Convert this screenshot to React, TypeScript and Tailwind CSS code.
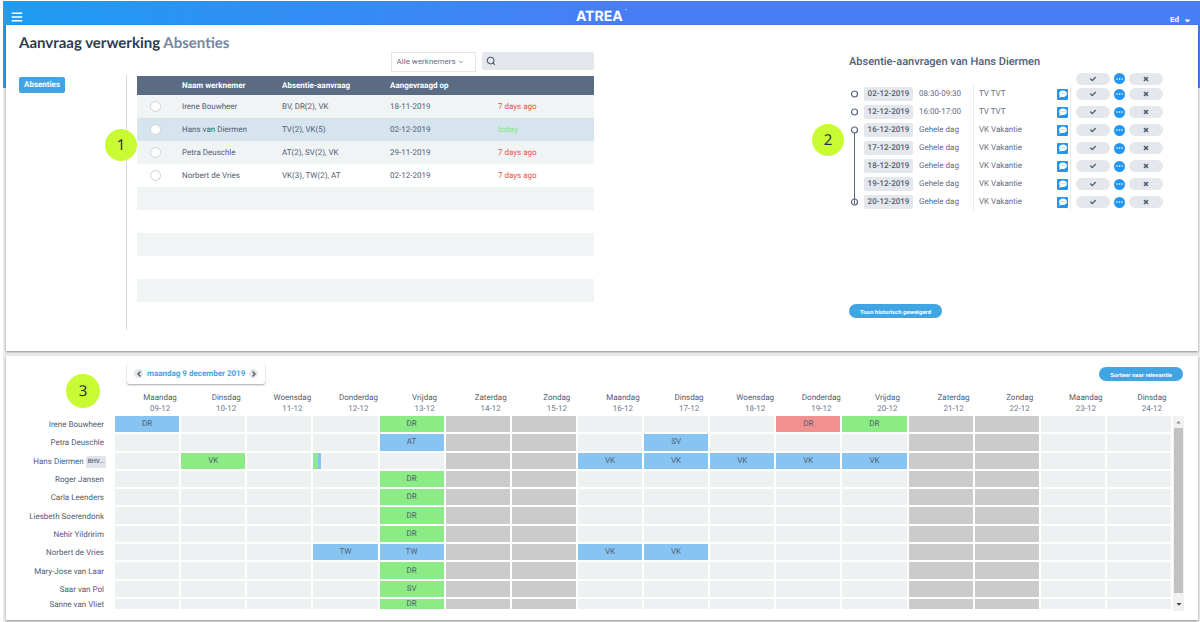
import { useState } from "react";
import { FaBars, FaCaretDown, FaCheck, FaCommentDots, FaTimes } from "react-icons/fa";
import { ChevronDown, ChevronLeft, ChevronRight, Search } from "lucide-react";

interface Employee {
    name: string;
    absence: string;
    requested: string;
    age: string;
}

const employees: Employee[] = [
    { name: "Irene Bouwheer", absence: "BV, DR(2), VK", requested: "18-11-2019", age: "7 days ago" },
    { name: "Hans van Diermen", absence: "TV(2), VK(5)", requested: "02-12-2019", age: "today" },
    { name: "Petra Deuschle", absence: "AT(2), SV(2), VK", requested: "29-11-2019", age: "7 days ago" },
    { name: "Norbert de Vries", absence: "VK(3), TW(2), AT", requested: "02-12-2019", age: "7 days ago" },
];

type Mark = "single" | "start" | "middle" | "end";

const requests: { date: string; time: string; type: string; mark: Mark }[] = [
    { date: "02-12-2019", time: "08:30-09:30", type: "TV TVT", mark: "single" },
    { date: "12-12-2019", time: "16:00-17:00", type: "TV TVT", mark: "single" },
    { date: "16-12-2019", time: "Gehele dag", type: "VK Vakantie", mark: "start" },
    { date: "17-12-2019", time: "Gehele dag", type: "VK Vakantie", mark: "middle" },
    { date: "18-12-2019", time: "Gehele dag", type: "VK Vakantie", mark: "middle" },
    { date: "19-12-2019", time: "Gehele dag", type: "VK Vakantie", mark: "middle" },
    { date: "20-12-2019", time: "Gehele dag", type: "VK Vakantie", mark: "end" },
];

const weekdays = ["Maandag", "Dinsdag", "Woensdag", "Donderdag", "Vrijdag", "Zaterdag", "Zondag"];

const days = Array.from({ length: 16 }, (_, i) => ({
    name: weekdays[i % 7],
    date: `${String(9 + i).padStart(2, "0")}-12`,
    weekend: i % 7 > 4,
}));

const tones = {
    blue: "bg-[#88c4f1]",
    green: "bg-[#8beb85]",
    red: "bg-[#f29090]",
    // two short entries at the start of the day
    split: "bg-[linear-gradient(90deg,#8beb85_5px,#88c4f1_5px,#88c4f1_8px,#edf1f2_8px)]",
};

type Tone = keyof typeof tones;

// entries are keyed by day index, 0 = first day shown
const schedule: { name: string; tag?: string; entries: Record<number, [string, Tone]> }[] = [
    { name: "Irene Bouwheer", entries: { 0: ["DR", "blue"], 4: ["DR", "green"], 10: ["DR", "red"], 11: ["DR", "green"] } },
    { name: "Petra Deuschle", entries: { 4: ["AT", "blue"], 8: ["SV", "blue"] } },
    {
        name: "Hans Diermen",
        tag: "BHV...",
        entries: {
            1: ["VK", "green"],
            3: ["", "split"],
            7: ["VK", "blue"],
            8: ["VK", "blue"],
            9: ["VK", "blue"],
            10: ["VK", "blue"],
            11: ["VK", "blue"],
        },
    },
    { name: "Roger Jansen", entries: { 4: ["DR", "green"] } },
    { name: "Carla Leenders", entries: { 4: ["DR", "green"] } },
    { name: "Liesbeth Soerendonk", entries: { 4: ["DR", "green"] } },
    { name: "Nehir Yildririm", entries: { 4: ["DR", "green"] } },
    { name: "Norbert de Vries", entries: { 3: ["TW", "blue"], 4: ["TW", "blue"], 7: ["VK", "blue"], 8: ["VK", "blue"] } },
    { name: "Mary-Jose van Laar", entries: { 4: ["DR", "green"] } },
    { name: "Saar van Pol", entries: { 4: ["SV", "green"] } },
    { name: "Sanne van Vliet", entries: { 4: ["DR", "green"] } },
];

function TimelineMark({ mark }: { mark: Mark }) {
    return (
        <svg width="12" height="18" viewBox="0 0 12 18" fill="none" stroke="#56657c" className="block">
            {mark !== "middle" && <circle cx="5.5" cy="9" r="3" strokeWidth="1.2" />}
            {mark === "start" && <path d="M5.5 12v6" />}
            {mark === "middle" && <path d="M5.5 0v18" />}
            {mark === "end" && <path d="M5.5 0v11" />}
        </svg>
    );
}

function Actions() {
    const pill = "flex h-3 w-[34px] items-center justify-center rounded-full bg-[#e4e8ed] text-[#46556b]";
    return (
        <div className="flex items-center gap-1 pl-[5px]">
            <button aria-label="Goedkeuren" className={pill}>
                <FaCheck size={6} />
            </button>
            <button aria-label="Meer" className="flex size-[11px] items-center justify-center rounded-full bg-[#2196f3]">
                <svg width="7" height="2" viewBox="0 0 7 2" fill="white">
                    <circle cx="1" cy="1" r=".8" />
                    <circle cx="3.5" cy="1" r=".8" />
                    <circle cx="6" cy="1" r=".8" />
                </svg>
            </button>
            <button aria-label="Weigeren" className={pill}>
                <FaTimes size={6} stroke="currentColor" strokeWidth={40} />
            </button>
        </div>
    );
}

function EmployeeTable() {
    const [selected, setSelected] = useState("");

    return (
        <table className="w-full table-fixed text-left text-[8px] text-[#4f5d73]">
            <colgroup>
                <col className="w-[45px]" />
                <col className="w-[100px]" />
                <col className="w-[108px]" />
                <col className="w-[108px]" />
                <col />
            </colgroup>
            <thead className="h-[19px] bg-[#5c6b84] text-white">
                <tr>
                    <td />
                    <th>Naam werknemer</th>
                    <th>Absentie-aanvraag</th>
                    <th>Aangevraagd op</th>
                    <td />
                </tr>
            </thead>
            <tbody>
                {employees.map((e, i) => (
                    <tr key={e.name} className={`h-[23px] ${i === 1 ? "bg-[#d6e4ee]" : i % 2 === 0 ? "bg-[#f1f4f5]" : ""}`}>
                        <td className="pl-[13px]">
                            <input
                                type="radio"
                                name="employee"
                                aria-label={e.name}
                                checked={selected === e.name}
                                onChange={() => setSelected(e.name)}
                                className="block size-[11px] appearance-none rounded-full border border-[#cfd3d6] bg-white checked:bg-[#42a5e3]"
                            />
                        </td>
                        <td>{e.name}</td>
                        <td>{e.absence}</td>
                        <td>{e.requested}</td>
                        <td className={e.age === "today" ? "text-[#7fe67a]" : "text-[#e5534b]"}>{e.age}</td>
                    </tr>
                ))}
                {[0, 1, 2, 3, 4].map(i => (
                    <tr key={i} className={`h-[23px] ${i % 2 === 0 ? "bg-[#f1f4f5]" : ""}`}>
                        <td colSpan={5} />
                    </tr>
                ))}
            </tbody>
        </table>
    );
}

function RequestTable() {
    return (
        <table className="w-full table-fixed border-separate border-spacing-0 text-[8px] text-[#5f6c80]">
            <colgroup>
                <col className="w-[15px]" />
                <col className="w-[49px]" />
                <col className="w-[61px]" />
                <col />
                <col className="w-[15px]" />
                <col className="w-[93px]" />
            </colgroup>
            <tbody>
                <tr className="h-[13px]">
                    <td colSpan={5} className="p-0" />
                    <td className="p-0"><Actions /></td>
                </tr>
                {requests.map(r => (
                    <tr key={r.date} className="h-[18px]">
                        <td className="p-0"><TimelineMark mark={r.mark} /></td>
                        <td className="p-0">
                            <span className="block h-3.5 rounded-xs bg-[#e4e8ed] text-center leading-[14px] font-medium text-[#4f5d73]">{r.date}</span>
                        </td>
                        <td className="border-r border-[#e9ecec] pl-1.5">{r.time}</td>
                        <td className="pl-[5px]">{r.type}</td>
                        <td className="border-r border-[#e9ecec] pl-px">
                            <button aria-label="Opmerking" className="flex size-[11px] items-center justify-center rounded-[1px] bg-[#2196f3] text-white">
                                <FaCommentDots size={8} />
                            </button>
                        </td>
                        <td className="p-0"><Actions /></td>
                    </tr>
                ))}
            </tbody>
        </table>
    );
}

function ScheduleTable() {
    return (
        <table className="h-[219px] w-full table-fixed border-separate border-spacing-0 text-[8px] text-[#4f5d73]">
            <colgroup>
                <col className="w-[109px]" />
                {days.map(d => <col key={d.date} />)}
            </colgroup>
            <thead>
                <tr className="h-6">
                    <td />
                    {days.map(d => (
                        <th key={d.date} className="pr-0 pl-6 text-center align-top leading-[11px] font-normal whitespace-nowrap">
                            <span className="block">{d.name}</span>
                            <span className="block text-[#6b778a]">{d.date}</span>
                        </th>
                    ))}
                </tr>
            </thead>
            <tbody>
                {schedule.map(row => (
                    <tr key={row.name} className="leading-3 last:h-3 last:leading-[10px]">
                        <th className={`py-0 text-right font-normal whitespace-nowrap ${row.tag ? "pr-[9px]" : "pr-[11px]"}`}>
                            <span className="flex items-center justify-end gap-0.5">
                                {row.name}
                                {row.tag && <span className="rounded-xs bg-[#e0e4ea] px-0.5 text-[6px] font-medium">{row.tag}</span>}
                            </span>
                        </th>
                        {days.map((d, i) => {
                            const entry = row.entries[i];
                            return (
                                <td
                                    key={d.date}
                                    className={`border-r-2 border-b-2 border-white p-0 text-center ${entry ? tones[entry[1]] : d.weekend ? "bg-[#cbcbcb]" : "bg-[#edf1f2]"}`}
                                >
                                    {entry?.[0]}
                                </td>
                            );
                        })}
                    </tr>
                ))}
            </tbody>
        </table>
    );
}

export default function App() {
    const round = "flex size-[9px] items-center justify-center rounded-full bg-[#e6e6e6] text-[#46556b]";
    const badge = "absolute flex items-center justify-center rounded-full bg-[#c9fb35] font-['Noto_Sans',sans-serif] text-[15px] text-[#26303f]";
    const panel = "relative mr-0.5 ml-[3px] bg-white shadow-[0_1px_2px_rgba(0,0,0,0.4)]";

    return (
        <div className="flex min-h-screen bg-white pt-px pl-[3px] font-[Roboto,sans-serif] [text-rendering:geometricPrecision]">
            <div className="flex min-w-0 flex-1 flex-col bg-[#ececec] bg-[linear-gradient(95deg,#1e9df2_0%,#477ef6_50%)] bg-[length:100%_87px] bg-no-repeat">
                <header className="grid h-6 grid-cols-3 items-center px-2 text-white">
                    <button aria-label="Menu" className="mt-1.5 w-fit">
                        <FaBars size={12} />
                    </button>
                    <div className="mt-1.5 flex justify-center gap-0.5 font-[Inter,sans-serif] text-[14px] leading-5 font-bold">
                        ATREA
                        <sup className="text-[4px] leading-3 font-normal opacity-60">™</sup>
                    </div>
                    <button className="mt-3 flex items-center gap-1 justify-self-end text-[8px] leading-3 font-bold">
                        Ed <FaCaretDown size={9} />
                    </button>
                </header>

                <section className={`${panel} pt-[9px] pb-[21px]`}>
                    <h1 className="pl-[13px] font-[Lato,sans-serif] text-[15px] leading-[18px] font-bold text-[#2c3b50]">
                        Aanvraag verwerking <span className="text-[#75869d]">Absenties</span>
                    </h1>
                    <div className="flex">
                        <nav className="mt-[23px] w-[121px] shrink-0 border-r border-[#d8dadb] pt-0.5 pl-[13px]">
                            <a href="#absenties" className="block w-fit rounded-xs bg-[#42a5e3] px-[5px] text-[8px] leading-4 font-bold text-white">
                                Absenties
                            </a>
                        </nav>

                        <div className="ml-2.5 w-[38.3%] shrink-0">
                            <div className="mb-1 flex h-5 items-start justify-end gap-1.5">
                                <div className="relative w-[85px]">
                                    <select
                                        aria-label="Werknemers"
                                        className="block h-5 w-full appearance-none border border-[#e3e7ea] bg-white pl-[5px] text-[8px] text-[#5f6c80]"
                                    >
                                        <option>Alle werknemers</option>
                                    </select>
                                    <ChevronDown size={6} strokeWidth={3} className="pointer-events-none absolute top-[7px] right-3 text-[#5f6c80]" />
                                </div>
                                <label className="flex h-[18px] w-28 items-center rounded-xs bg-[#e4e8ed] pl-1 text-[#46556b]">
                                    <Search size={10} strokeWidth={2.5} className="shrink-0" />
                                    <input type="search" aria-label="Zoeken" className="min-w-0 flex-1 bg-transparent px-1 text-[8px] outline-none" />
                                </label>
                            </div>
                            <EmployeeTable />
                        </div>

                        <div className="mr-[34px] mb-3 ml-auto flex w-[315px] flex-col">
                            <h2 className="text-[11px] leading-5 font-medium text-[#4f5d73]">Absentie-aanvragen van Hans Diermen</h2>
                            <RequestTable />
                            <button className="mt-[93px] h-3.5 w-fit rounded-full bg-[#42a5e3] px-[11px] text-[6px] font-bold text-white">
                                Toon historisch geweigerd
                            </button>
                        </div>
                    </div>
                    <div className={`${badge} top-[104px] left-[99px] size-8`}>1</div>
                    <div className={`${badge} top-[99px] right-[354px] size-8`}>2</div>
                </section>

                <section className={`${panel} mt-[5px] pt-[7px] pb-[9px]`}>
                    <div className="flex items-start justify-between pr-[15px] pl-[121px]">
                        <div className="flex h-[21px] items-center gap-1 rounded-xs px-[7px] shadow-[0_1px_2px_rgba(0,0,0,0.35)]">
                            <button aria-label="Vorige" className={round}>
                                <ChevronLeft size={8} strokeWidth={4} />
                            </button>
                            <span className="text-[8px] font-bold text-[#42a5e3]">maandag 9 december 2019</span>
                            <button aria-label="Volgende" className={round}>
                                <ChevronRight size={8} strokeWidth={4} />
                            </button>
                        </div>
                        <button className="mt-1 h-3.5 rounded-full bg-[#42a5e3] px-[11px] text-[6px] font-bold text-white">
                            Sorteer naar relevantie
                        </button>
                    </div>
                    <div className="mt-2 mr-3.5 flex">
                        <div className="min-w-0 flex-1">
                            <ScheduleTable />
                        </div>
                        <div className="mt-6 flex w-[11px] flex-col items-center bg-[#f1f1f1] text-[#8d8d8d]">
                            <button aria-label="Omhoog" className="flex h-3 items-center">
                                <FaCaretDown size={7} className="rotate-180" />
                            </button>
                            <div className="w-[9px] flex-1 bg-[#c1c1c1]" />
                            <button aria-label="Omlaag" className="flex h-[18px] items-center pt-1 text-[#46464f]">
                                <FaCaretDown size={8} />
                            </button>
                        </div>
                    </div>
                    <div className={`${badge} top-[18px] left-[60px] size-[34px]`}>3</div>
                </section>
            </div>
        </div>
    );
}
